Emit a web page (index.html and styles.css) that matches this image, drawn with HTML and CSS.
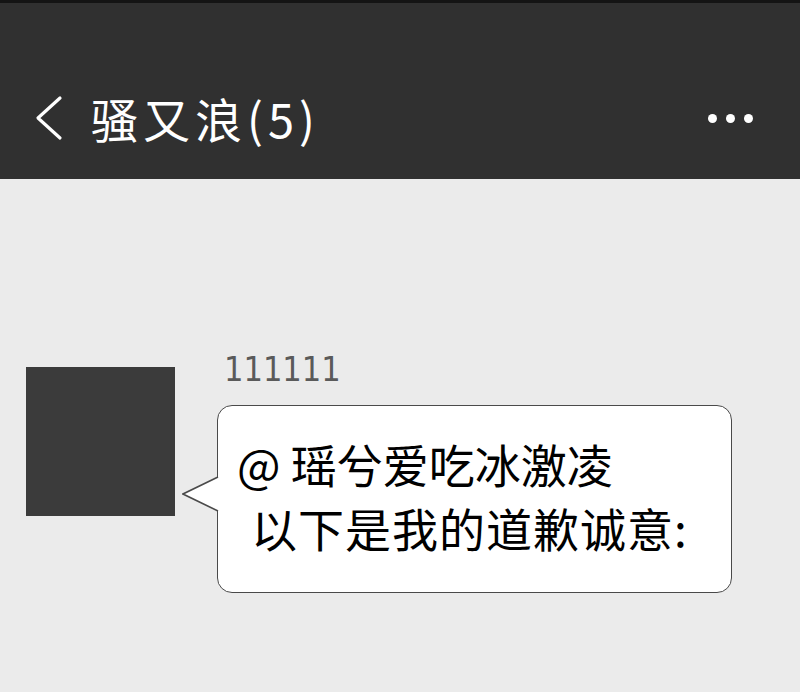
FILE: index.html
```
<!DOCTYPE html>
<html lang="zh-CN">
<head>
    <meta charset="UTF-8">
    <meta name="viewport" content="width=device-width, initial-scale=1.0">
    <title>骚又浪(5)</title>
    <link rel="stylesheet" href="styles.css">
</head>
<body>
    <div class="screen">
        <div class="top-bar">
            <button class="back">
                <svg width="30" height="46" viewBox="0 0 30 46">
                    <polyline points="26,3 4,23 26,43" fill="none" stroke="#fff" stroke-width="3.2" stroke-linecap="round" stroke-linejoin="round"/>
                </svg>
            </button>
            <span class="title">骚又浪(5)</span>
            <div class="more">
                <span></span><span></span><span></span>
            </div>
        </div>

        <div class="chat">
            <div class="message">
                <div class="avatar"></div>
                <div class="body">
                    <div class="name">111111</div>
                    <div class="bubble">
                        <svg class="tail" width="40" height="36" viewBox="0 0 40 36">
                            <polygon points="40,0 36,1 1,18 36,35 40,36" fill="#fff"/>
                            <polyline points="36,1 1,18 36,35" fill="none" stroke="#4a4a4a" stroke-width="1.6"/>
                        </svg>
                        <div class="line">@ 瑶兮爱吃冰激凌</div>
                        <div class="line indent">以下是我的道歉诚意:</div>
                    </div>
                </div>
            </div>
        </div>
    </div>
</body>
</html>
```
FILE: styles.css
```
* {
    box-sizing: border-box;
}
body {
    margin: 0;
    background-color: #ebebeb;
    font-family: "Noto Sans CJK SC", "Noto Sans", sans-serif;
}
.screen {
    width: 800px;
    height: 692px;
    overflow: hidden;
}
.top-bar {
    height: 179px;
    border-top: 3px solid #141414;
    background-color: #303030;
    display: flex;
    align-items: center;
    padding: 54px 47px 0 0;
}
.back {
    border: none;
    background: none;
    padding: 0;
    margin-left: 34px;
    display: flex;
}
.title {
    color: #fff;
    font-size: 47px;
    line-height: 60px;
    letter-spacing: 5px;
    margin-left: 27px;
}
.more {
    margin-left: auto;
    display: flex;
    gap: 9px;
}
.more span {
    width: 9px;
    height: 9px;
    border-radius: 50%;
    background-color: #fff;
}
.chat {
    padding-top: 170px;
}
.message {
    display: flex;
    align-items: flex-start;
}
.avatar {
    width: 149px;
    height: 149px;
    margin: 18px 0 0 26px;
    background-color: #3b3b3b;
}
.body {
    margin-left: 42px;
}
.name {
    color: #5a5a5a;
    font-family: "DejaVu Sans Condensed", "DejaVu Sans", sans-serif;
    font-stretch: condensed;
    font-size: 34px;
    line-height: 40px;
    margin: 0 0 16px 7px;
}
.bubble {
    position: relative;
    width: 515px;
    height: 188px;
    background-color: #fff;
    border: 1.6px solid #4a4a4a;
    border-radius: 15px;
    padding: 25px 0 0 19px;
}
.tail {
    position: absolute;
    left: -36px;
    top: 70px;
}
.line {
    color: #000;
    font-size: 46px;
    line-height: 64px;
    white-space: nowrap;
}
.indent {
    padding-left: 14px;
    letter-spacing: 1px;
}
```
